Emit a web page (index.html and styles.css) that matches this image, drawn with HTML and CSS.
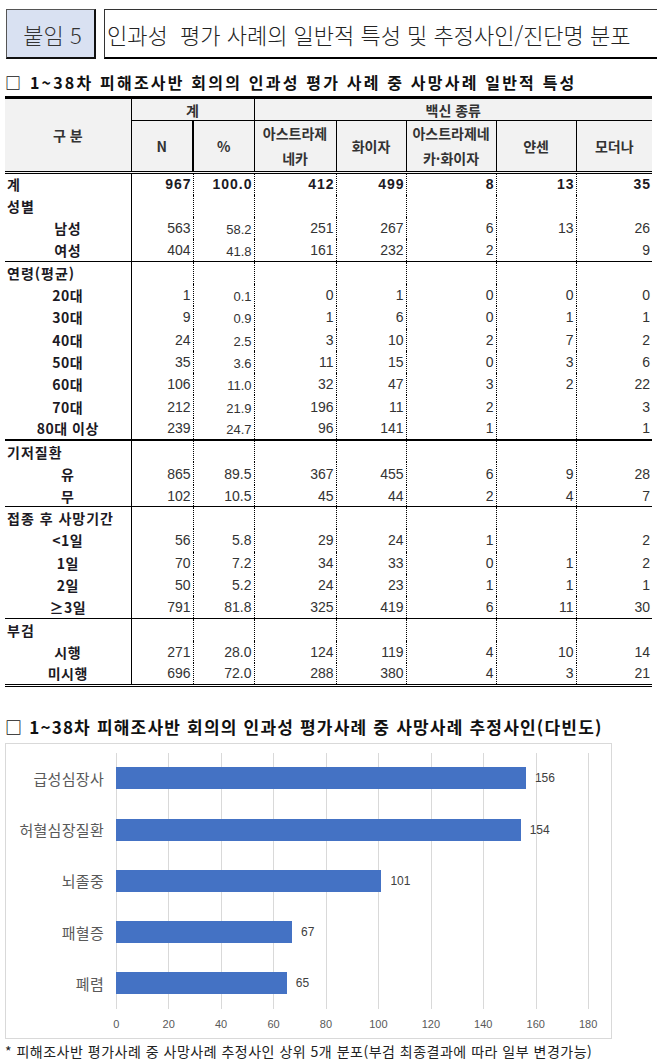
FILE: index.html
```html
<!DOCTYPE html>
<html lang="ko">
<head>
<meta charset="utf-8">
<link rel="stylesheet" href="styles.css">
</head>
<body>
<div class="page">
  <header class="head">
    <div class="tag">붙임 5</div>
    <div class="title">인과성&nbsp; 평가 사례의 일반적 특성 및 추정사인/진단명 분포</div>
  </header>

  <h2 class="sub1">□ 1~38차 피해조사반 회의의 인과성 평가 사례 중 사망사례 일반적 특성</h2>

  <table class="tbl">
    <colgroup>
      <col class="c0"><col class="c1"><col class="c2"><col class="c3"><col class="c4"><col class="c5"><col class="c6"><col class="c7">
    </colgroup>
    <thead>
      <tr class="h1">
        <th rowspan="2" class="hl">구 분</th>
        <th colspan="2" class="hk">계</th>
        <th colspan="5" class="hv">백신 종류</th>
      </tr>
      <tr class="h2">
        <th class="hn">N</th>
        <th class="hs">%</th>
        <th class="hs">아스트라제<br>네카</th>
        <th class="hs">화이자</th>
        <th class="hs">아스트라제네<br>카·화이자</th>
        <th class="hs">얀센</th>
        <th>모더나</th>
      </tr>
    </thead>
    <tbody class="g1">
      <tr class="tot"><td class="cat">계</td><td>967</td><td>100.0</td><td>412</td><td>499</td><td>8</td><td>13</td><td>35</td></tr>
      <tr><td class="cat">성별</td><td></td><td></td><td></td><td></td><td></td><td></td><td></td></tr>
      <tr><td class="sub">남성</td><td>563</td><td class="lo">58.2</td><td>251</td><td>267</td><td>6</td><td>13</td><td>26</td></tr>
      <tr><td class="sub">여성</td><td>404</td><td class="lo">41.8</td><td>161</td><td>232</td><td>2</td><td></td><td>9</td></tr>
    </tbody>
    <tbody class="g2">
      <tr><td class="cat">연령(평균)</td><td></td><td></td><td></td><td></td><td></td><td></td><td></td></tr>
      <tr><td class="sub">20대</td><td>1</td><td class="lo">0.1</td><td>0</td><td>1</td><td>0</td><td>0</td><td>0</td></tr>
      <tr><td class="sub">30대</td><td>9</td><td class="lo">0.9</td><td>1</td><td>6</td><td>0</td><td>1</td><td>1</td></tr>
      <tr><td class="sub">40대</td><td>24</td><td class="lo">2.5</td><td>3</td><td>10</td><td>2</td><td>7</td><td>2</td></tr>
      <tr><td class="sub">50대</td><td>35</td><td class="lo">3.6</td><td>11</td><td>15</td><td>0</td><td>3</td><td>6</td></tr>
      <tr><td class="sub">60대</td><td>106</td><td class="lo">11.0</td><td>32</td><td>47</td><td>3</td><td>2</td><td>22</td></tr>
      <tr><td class="sub">70대</td><td>212</td><td class="lo">21.9</td><td>196</td><td>11</td><td>2</td><td></td><td>3</td></tr>
      <tr><td class="sub">80대 이상</td><td>239</td><td class="lo">24.7</td><td>96</td><td>141</td><td>1</td><td></td><td>1</td></tr>
    </tbody>
    <tbody class="g3">
      <tr><td class="cat">기저질환</td><td></td><td></td><td></td><td></td><td></td><td></td><td></td></tr>
      <tr><td class="sub">유</td><td>865</td><td>89.5</td><td>367</td><td>455</td><td>6</td><td>9</td><td>28</td></tr>
      <tr><td class="sub">무</td><td>102</td><td>10.5</td><td>45</td><td>44</td><td>2</td><td>4</td><td>7</td></tr>
    </tbody>
    <tbody class="g4">
      <tr><td class="cat">접종 후 사망기간</td><td></td><td></td><td></td><td></td><td></td><td></td><td></td></tr>
      <tr><td class="sub">&lt;1일</td><td>56</td><td>5.8</td><td>29</td><td>24</td><td>1</td><td></td><td>2</td></tr>
      <tr><td class="sub">1일</td><td>70</td><td>7.2</td><td>34</td><td>33</td><td>0</td><td>1</td><td>2</td></tr>
      <tr><td class="sub">2일</td><td>50</td><td>5.2</td><td>24</td><td>23</td><td>1</td><td>1</td><td>1</td></tr>
      <tr><td class="sub">≥3일</td><td>791</td><td>81.8</td><td>325</td><td>419</td><td>6</td><td>11</td><td>30</td></tr>
    </tbody>
    <tbody class="g5">
      <tr><td class="cat">부검</td><td></td><td></td><td></td><td></td><td></td><td></td><td></td></tr>
      <tr><td class="sub">시행</td><td>271</td><td>28.0</td><td>124</td><td>119</td><td>4</td><td>10</td><td>14</td></tr>
      <tr><td class="sub">미시행</td><td>696</td><td>72.0</td><td>288</td><td>380</td><td>4</td><td>3</td><td>21</td></tr>
    </tbody>
  </table>

  <h2 class="sub2">□ 1~38차 피해조사반 회의의 인과성 평가사례 중 사망사례 추정사인(다빈도)</h2>

  <div class="chart">
    <div class="plot">
      <div class="cats">
        <div class="cat-row">급성심장사</div>
        <div class="cat-row">허혈심장질환</div>
        <div class="cat-row">뇌졸중</div>
        <div class="cat-row">패혈증</div>
        <div class="cat-row">폐렴</div>
      </div>
      <div class="area">
        <div class="bar-row"><div class="bar" style="width:86.67%"></div><span class="val">156</span></div>
        <div class="bar-row"><div class="bar" style="width:85.56%"></div><span class="val">154</span></div>
        <div class="bar-row"><div class="bar" style="width:56.11%"></div><span class="val">101</span></div>
        <div class="bar-row"><div class="bar" style="width:37.22%"></div><span class="val">67</span></div>
        <div class="bar-row"><div class="bar" style="width:36.11%"></div><span class="val">65</span></div>
      </div>
    </div>
    <div class="axis">
      <span>0</span><span>20</span><span>40</span><span>60</span><span>80</span><span>100</span><span>120</span><span>140</span><span>160</span><span>180</span>
    </div>
  </div>

  <p class="note">* 피해조사반 평가사례 중 사망사례 추정사인 상위 5개 분포(부검 최종결과에 따라 일부 변경가능)</p>
</div>
</body>
</html>
```

FILE: styles.css
```css
* { box-sizing: border-box; }
html, body { margin: 0; padding: 0; background: #fff; }
body {
  font-family: "Noto Sans CJK KR", "Liberation Sans", sans-serif;
  color: #222;
  width: 657px;
  overflow: hidden;
}
.page { width: 657px; }

.head {
  display: flex;
  gap: 8px;
  padding: 9px 0 0 6px;
  margin-right: -12px;
}
.tag {
  flex: none;
  width: 90px;
  height: 50px;
  background: #d9e1f2;
  border: 1px solid #555;
  border-right: 2px solid #111;
  border-bottom: 2px solid #111;
  font-size: 22px;
  color: #333;
  display: flex;
  align-items: center;
  justify-content: center;
  padding-left: 4px;
  font-weight: 300;
}
.title {
  flex: 1;
  height: 50px;
  border: 1px solid #333;
  border-bottom: 2px solid #000;
  font-size: 22px;
  color: #222;
  display: flex;
  align-items: center;
  padding-left: 2px;
  white-space: nowrap;
  font-weight: 300;
}

.sub1 {
  margin: 11px 0 2px 5px;
  font-size: 16px;
  line-height: 24px;
  height: 24px;
  font-weight: bold;
  letter-spacing: 2.2px;
  color: #111;
  white-space: nowrap;
}

.tbl {
  margin-left: 5px;
  width: 647px;
  table-layout: fixed;
  border-collapse: collapse;
  font-size: 14px;
}
.c0 { width: 126px; }
.c1 { width: 62px; }
.c2 { width: 61px; }
.c3 { width: 82px; }
.c4 { width: 70px; }
.c5 { width: 90px; }
.c6 { width: 80px; }
.c7 { width: 76px; }

.tbl th {
  background: #f2f2f2;
  font-weight: bold;
  color: #333;
  font-size: 14px;
  line-height: 25px;
  padding: 0;
  text-align: center;
}
.h1 th { border-top: 3px solid #000; height: 23px; line-height: 20px; }
.h2 th { height: 51px; border-bottom: 3px double #000; }
.hl { border-right: 1px solid #000; border-bottom: 3px double #000; }
.hk { border-right: 1px solid #000; border-bottom: 1px solid #000; }
.hv { border-bottom: 1px solid #000; }
.hn { border-right: 2px solid #000; }
.hs { border-right: 1px solid #000; }

.tbl td {
  height: 22.3px;
  padding: 0 2px 0 0;
  line-height: 20px;
  text-align: right;
  font-family: "Liberation Sans", sans-serif;
  color: #333;
  border-right: 1px dotted #000;
  white-space: nowrap;
  overflow: hidden;
}
.tbl td:last-child { border-right: none; }
.tbl td.cat, .tbl td.sub {
  font-family: "Noto Sans CJK KR", sans-serif;
  font-weight: bold;
  color: #1c1a24;
  border-right: 1px solid #000;
  padding: 0;
}
.tbl td.cat { text-align: left; padding-left: 2px; letter-spacing: 1px; }
.tbl td.sub { text-align: center; letter-spacing: 0.5px; }
.tbl td.lo { padding-top: 4px; line-height: 16px; font-size: 13px; }
.tot td { font-weight: bold; color: #1c1a24; letter-spacing: 1px; padding-right: 1px; }

.g2 tr:first-child td, .g4 tr:first-child td, .g5 tr:first-child td { border-top: 1px solid #000; }
.g1 tr:first-child td { border-top: none; }
.g3 tr:first-child td { border-top: 2px solid #000; }
.g5 tr:last-child td { border-bottom: 3px double #000; }

.sub2 {
  margin: 28px 0 4px 5px;
  font-size: 17px;
  line-height: 24px;
  height: 24px;
  font-weight: bold;
  letter-spacing: 1.2px;
  color: #111;
  white-space: nowrap;
}

.chart {
  margin-left: 5px;
  width: 607px;
  height: 296px;
  border: 1px solid #d9d9d9;
  padding-top: 9px;
}
.plot { display: flex; }
.cats { width: 110px; flex: none; }
.cat-row {
  height: 51.25px;
  display: flex;
  align-items: center;
  justify-content: flex-end;
  padding-right: 12px;
  font-size: 15px;
  color: #595959;
  letter-spacing: 0.3px;
}
.area {
  width: 473px;
  flex: none;
  background: repeating-linear-gradient(to right, #d9d9d9 0 1px, transparent 1px 52.44px);
}
.bar-row {
  height: 51.25px;
  display: flex;
  align-items: center;
}
.bar {
  height: 22px;
  background: #4472c4;
  flex: none;
}
.val {
  margin-left: 9px;
  font-family: "Liberation Sans Narrow", "Liberation Sans", sans-serif;
  font-size: 12px;
  color: #404040;
}
.axis {
  display: flex;
  margin-left: 84px;
  height: 30px;
  align-items: center;
}
.axis span {
  flex: none;
  width: 52.44px;
  text-align: center;
  font-family: "Liberation Sans", sans-serif;
  font-size: 11px;
  color: #595959;
}

.note {
  margin: 2px 0 0 5px;
  font-size: 14px;
  line-height: 20px;
  letter-spacing: 0.5px;
  color: #222;
  white-space: nowrap;
}
```
